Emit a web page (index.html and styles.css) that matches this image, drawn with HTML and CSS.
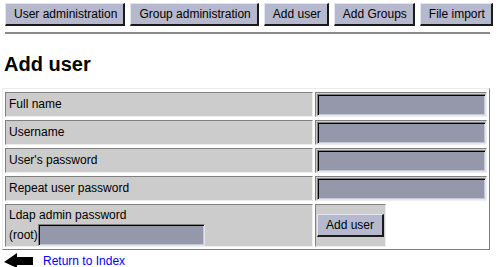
FILE: index.html
```html
<!DOCTYPE html>
<html lang="en">
  <head>
    <meta charset="UTF-8" />
    <title>Add user</title>
    <link rel="stylesheet" href="styles.css">
  </head>

  <body>
    <!-- Meny med knapper øverst -->
    <div class="meny">
      <button type="button" class="knapp">User administration</button>
      <button type="button" class="knapp">Group administration</button>
      <button type="button" class="knapp">Add user</button>
      <button type="button" class="knapp">Add Groups</button>
      <button type="button" class="knapp">File import</button>
    </div>

    <hr class="linje" />

    <h1>Add user</h1>

    <form class="skjema" action="#">
      <div class="celle">Full name</div>
      <div class="celle felt"><input type="text" name="fullname" /></div>

      <div class="celle">Username</div>
      <div class="celle felt"><input type="text" name="username" /></div>

      <div class="celle">User's password</div>
      <div class="celle felt"><input type="password" name="password" /></div>

      <div class="celle">Repeat user password</div>
      <div class="celle felt"><input type="password" name="password2" /></div>

      <div class="celle ldap">
        <span>Ldap admin password</span>
        <span class="root">(root)<input type="password" name="rootpw" class="rootfelt" /></span>
      </div>
      <div class="celle send">
        <button type="submit" class="knapp">Add user</button>
      </div>
    </form>

    <div class="tilbake">
      <svg width="30" height="15" viewBox="0 0 30 15">
        <path d="M0 9 L13 0 V4 H29 V12 H13 V15 Z" fill="#000" />
      </svg>
      <a href="#">Return to Index</a>
    </div>
  </body>
</html>
```

FILE: styles.css
```css
body {
  margin: 0;
  padding: 3px 10px 0 2px;
  font-family: "Liberation Sans", Arial, sans-serif;
  font-size: 12px;
  color: #000;
  background-color: #fff;
}

.meny {
  display: flex;
  gap: 5px;
  padding-left: 3px;
}

.knapp {
  flex: none;
  white-space: nowrap;
  font-family: inherit;
  font-size: 12px;
  color: #000;
  background-color: #b6b9cd;
  border-style: solid;
  border-width: 1px 2px 2px 1px;
  border-color: #e4e5ee #1a1a1a #1a1a1a #e4e5ee;
  padding: 0 6px 0 8px;
  height: 23px;
  line-height: 20px;
}

.linje {
  margin: 6px 0 0 3px;
  border: 0;
  border-top: 2px solid #8a8a8a;
  height: 0;
}

h1 {
  margin: 17px 0 0 2px;
  font-size: 20px;
  line-height: 26px;
  height: 37px;
}

/* Skjemaet er et rutenett med grå celler */
.skjema {
  display: grid;
  grid-template-columns: 1fr 172px;
  gap: 3px 2px;
  padding: 3px 2px 2px 2px;
  border: 1px solid;
  border-color: #ececec #808080 #808080 #ececec;
}

.celle {
  background-color: #cccccc;
  border: 1px solid;
  border-color: #808080 #eeeeee #eeeeee #808080;
  padding: 1px 3px;
  height: 25px;
  box-sizing: border-box;
  line-height: 21px;
}

.felt {
  padding: 1px 0 1px 1px;
}

input {
  display: block;
  box-sizing: border-box;
  width: 169px;
  height: 22px;
  margin: 0;
  padding: 0 3px;
  background-color: #9598aa;
  border: 1px solid;
  border-color: #808080 #e4e5ee #e4e5ee #808080;
  box-shadow: inset 1px 1px 0 #000, inset -1px -1px 0 #c6c8d8;
  font-family: inherit;
  font-size: 12px;
}

.ldap {
  height: 43px;
  display: flex;
  flex-direction: column;
  line-height: 16px;
  padding-top: 2px;
}

.root {
  display: flex;
  align-items: center;
}

.rootfelt {
  width: 167px;
  margin-top: 1px;
}

.send {
  height: 43px;
  justify-self: start;
  width: 71px;
  display: flex;
  align-items: center;
  padding: 1px;
}

.send .knapp {
  width: 67px;
  padding: 0;
}

.tilbake {
  display: flex;
  align-items: center;
  gap: 9px;
  margin: 3px 0 0 2px;
}

.tilbake a {
  color: #0000ee;
  text-decoration: none;
}
```
